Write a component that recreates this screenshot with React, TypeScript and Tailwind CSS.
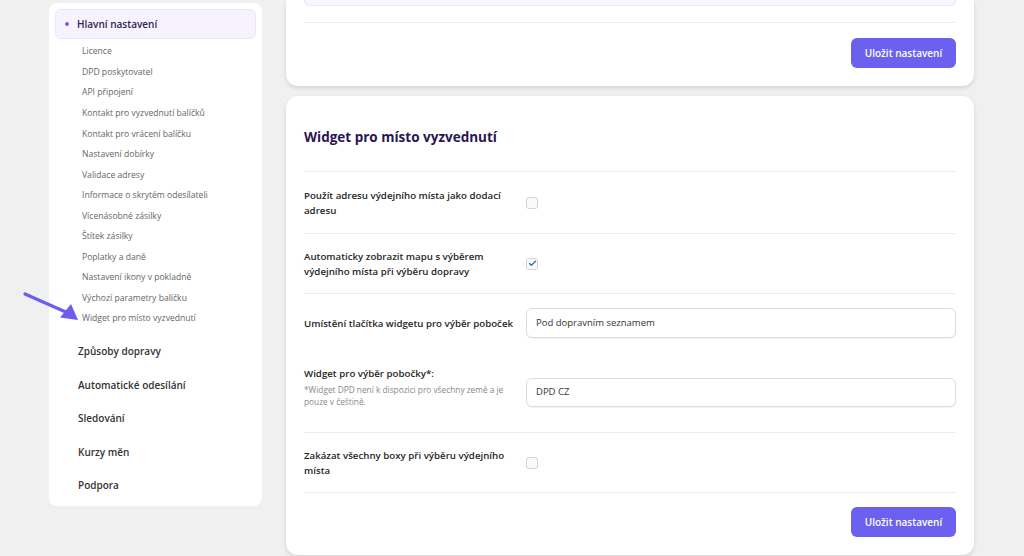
import { Check } from "lucide-react"

const subItems = [
  "Licence",
  "DPD poskytovatel",
  "API připojení",
  "Kontakt pro vyzvednutí balíčků",
  "Kontakt pro vrácení balíčku",
  "Nastavení dobírky",
  "Validace adresy",
  "Informace o skrytém odesílateli",
  "Vícenásobné zásilky",
  "Štítek zásilky",
  "Poplatky a daně",
  "Nastavení ikony v pokladně",
  "Výchozí parametry balíčku",
  "Widget pro místo vyzvednutí",
]

const mainItems = ["Způsoby dopravy", "Automatické odesílání", "Sledování", "Kurzy měn", "Podpora"]

function SaveButton() {
  return (
    <button className="h-[30px] w-[105px] rounded-md bg-[#6c61ef] text-[10px] font-semibold text-white">
      Uložit nastavení
    </button>
  )
}

function Checkbox({ checked = false }: { checked?: boolean }) {
  return (
    <div className="flex h-[12px] w-[12px] items-center justify-center rounded-[3px] border border-[#d4d4d4] bg-[#fafafa]">
      {checked && <Check className="h-[9px] w-[9px] text-[#2271b1]" strokeWidth={3.5} />}
    </div>
  )
}

function Sidebar() {
  return (
    <aside className="mt-[3px] h-[503px] w-[213px] shrink-0 rounded-lg bg-white px-[6px] pt-[6px]">
      <div className="flex h-[30px] items-center rounded-md border border-[#ebe6fb] bg-[#f6f3ff] pl-[9px]">
        <span className="h-[4px] w-[4px] rounded-full bg-[#6c61ef]" />
        <span className="ml-[8px] text-[10px] font-semibold text-[#2f1f55]">Hlavní nastavení</span>
      </div>
      <ul className="mt-[2.5px] pl-[27px]">
        {subItems.map((s) => (
          <li key={s} className="flex h-[20.55px] items-center text-[8.6px] text-[#666]">
            {s}
          </li>
        ))}
      </ul>
      <ul className="mt-[5.5px] pl-[23px]">
        {mainItems.map((s) => (
          <li key={s} className="flex h-[33.6px] items-center text-[10px] font-semibold text-[#333]">
            {s}
          </li>
        ))}
      </ul>
    </aside>
  )
}

const label = "text-[9.7px] font-semibold leading-[15px] text-[#262626]"

export default function App() {
  return (
    <div
      className="relative h-[556px] w-[1024px] overflow-hidden bg-[#f0f0f0]"
      style={{ fontFamily: '"Open Sans", "Noto Sans", sans-serif' }}
    >
      <div className="flex gap-[24px] pl-[49px]">
        <Sidebar />

        <main className="flex w-[688px] flex-col gap-[10px]">
          {/* previous section, scrolled off the top */}
          <section className="rounded-b-xl bg-white px-[18px] shadow-[0_2px_4px_rgba(0,0,0,0.12)]">
            <div className="h-[6px] rounded-b-md border-x border-b border-[#ebe6fb] bg-[#f7f5ff]" />
            <div className="mt-[16px] border-t border-[#ececec]" />
            <div className="flex justify-end pb-[18px] pt-[15px]">
              <SaveButton />
            </div>
          </section>

          <section className="rounded-xl bg-white px-[18px] shadow-[0_2px_4px_rgba(0,0,0,0.12)]">
            <h2 className="pb-[24px] pt-[31px] text-[13.5px] font-bold leading-[20px] text-[#2a1650]">
              Widget pro místo vyzvednutí
            </h2>

            <div className="flex items-center border-t border-[#ececec] py-[15.5px]">
              <div className={`w-[222px] pr-[14px] ${label}`}>Použít adresu výdejního místa jako dodací adresu</div>
              <Checkbox />
            </div>

            <div className="flex items-center border-t border-[#ececec] py-[14.5px]">
              <div className={`w-[222px] pr-[14px] ${label}`}>
                Automaticky zobrazit mapu s výběrem výdejního místa při výběru dopravy
              </div>
              <Checkbox checked />
            </div>

            <div className="flex items-center border-t border-[#ececec] pb-[20px] pt-[14px]">
              <div className={`w-[222px] whitespace-nowrap ${label}`}>Umístění tlačítka widgetu pro výběr poboček</div>
              <div className="flex h-[30px] flex-1 items-center rounded-md border border-[#dcdcdc] pl-[9px] text-[9.5px] text-[#333] shadow-[0_1px_1px_rgba(0,0,0,0.06)]">
                Pod dopravním seznamem
              </div>
            </div>

            <div className="flex items-start pb-[24px]">
              <div className="mt-[8px] w-[222px] pr-[14px]">
                <div className={label}>Widget pro výběr pobočky*:</div>
                <div className="mt-[3px] text-[8.3px] leading-[12px] text-[#888]">
                  *Widget DPD není k dispozici pro všechny země a je pouze v češtině.
                </div>
              </div>
              <div className="mt-[20px] flex h-[29px] flex-1 items-center rounded-md border border-[#dcdcdc] pl-[9px] text-[9.5px] text-[#333] shadow-[0_1px_1px_rgba(0,0,0,0.06)]">
                DPD CZ
              </div>
            </div>

            <div className="flex items-center border-t border-[#ececec] py-[14.5px]">
              <div className={`w-[222px] pr-[14px] ${label}`}>Zakázat všechny boxy při výběru výdejního místa</div>
              <Checkbox />
            </div>

            <div className="flex justify-end border-t border-[#ececec] pb-[18px] pt-[14px]">
              <SaveButton />
            </div>
          </section>
        </main>
      </div>

      <svg className="absolute left-[20px] top-[285px] h-[40px] w-[65px]" viewBox="0 0 65 40">
        <line x1="5" y1="9" x2="48" y2="28" stroke="#6c5cf0" strokeWidth="3.2" strokeLinecap="round" />
        <polygon points="58,35 40,32.5 51,19" fill="#6c5cf0" />
      </svg>
    </div>
  )
}
